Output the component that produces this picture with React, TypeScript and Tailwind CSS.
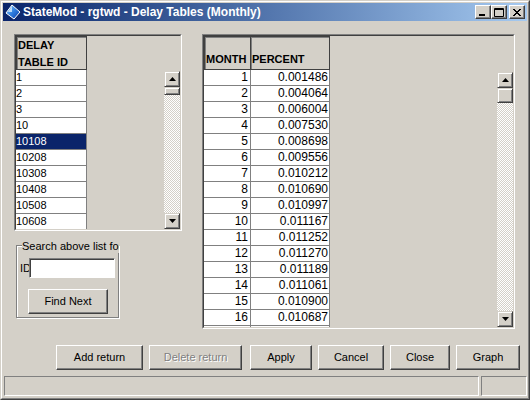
const ids = ["1", "2", "3", "10", "10108", "10208", "10308", "10408", "10508", "10608", "10708"];

const percents = [
  "0.001486", "0.004064", "0.006004", "0.007530", "0.008698", "0.009556",
  "0.010212", "0.010690", "0.010997", "0.011167", "0.011252", "0.011270",
  "0.011189", "0.011061", "0.010900", "0.010687", "0.010443",
];

const raised =
  "border border-t-white border-l-white border-r-[#404040] border-b-[#404040] shadow-[inset_-1px_-1px_0_#808080]";
const sunken =
  "border border-t-[#808080] border-l-[#808080] border-r-white border-b-white";

function Arrow({ up }: { up?: boolean }) {
  return (
    <div className="flex h-4 w-4 shrink-0 items-center justify-center border border-t-[#d4d0c8] border-l-[#d4d0c8] border-r-[#404040] border-b-[#404040] bg-[#d4d0c8] shadow-[inset_1px_1px_0_#fff,inset_-1px_-1px_0_#808080]">
      <svg width="7" height="4" viewBox="0 0 7 4">
        <polygon points={up ? "0,4 7,4 3.5,0" : "0,0 7,0 3.5,4"} fill="#000" />
      </svg>
    </div>
  );
}

function Scrollbar({ thumb }: { thumb: string }) {
  return (
    <div className="flex h-full w-4 flex-col">
      <Arrow up />
      <div
        className={`${thumb} shrink-0 border border-t-[#d4d0c8] border-l-[#d4d0c8] border-r-[#404040] border-b-[#404040] bg-[#d4d0c8] shadow-[inset_1px_1px_0_#fff,inset_-1px_-1px_0_#808080]`}
      />
      <div className="flex-1 bg-[repeating-conic-gradient(#d4d0c8_0_25%,#ffffff_0_50%)] bg-[length:2px_2px]" />
      <Arrow />
    </div>
  );
}

function Button({ label, width, disabled }: { label: string; width: string; disabled?: boolean }) {
  return (
    <button
      type="button"
      className={`${width} flex h-[25px] shrink-0 items-center justify-center bg-[#d4d0c8] text-[11px] ${raised} ${
        disabled ? "text-[#808080] [text-shadow:1px_1px_0_#fff]" : "text-black"
      }`}
    >
      {label}
    </button>
  );
}

function TitleButton({ kind }: { kind: "min" | "max" | "close" }) {
  return (
    <div className="flex h-[14px] w-4 items-center justify-center bg-[#d4d0c8] border border-t-white border-l-white border-r-[#404040] border-b-[#404040] shadow-[inset_-1px_-1px_0_#808080]">
      <svg width="10" height="9" viewBox="0 0 10 9">
        {kind === "min" && <rect x="1" y="6" width="6" height="2" fill="#000" />}
        {kind === "max" && (
          <path d="M0.5 0.5h9v8h-9z M0.5 1.5h9" stroke="#000" fill="none" strokeWidth="1" />
        )}
        {kind === "close" && (
          <path d="M1 1l7 7M2 1l7 7M8 1l-7 7M9 1l-7 7" stroke="#000" strokeWidth="1" />
        )}
      </svg>
    </div>
  );
}

function AppIcon() {
  return (
    <svg width="16" height="16" viewBox="0 0 16 16">
      <defs>
        <linearGradient id="gem" x1="0" y1="0" x2="1" y2="1">
          <stop offset="0" stopColor="#9fd4ff" />
          <stop offset="0.5" stopColor="#2f7fe0" />
          <stop offset="1" stopColor="#0b3ca8" />
        </linearGradient>
      </defs>
      <path d="M7 1 L15 8 L9 15 L1 9 Z" fill="url(#gem)" stroke="#ffffff" strokeWidth="1" />
      <path d="M7 2 L3 8 L7 8 Z" fill="#d8efff" opacity="0.8" />
    </svg>
  );
}

export default function App() {
  return (
    <div className="h-[400px] w-[530px] font-['Liberation_Sans',Arial,sans-serif] text-black">
      <div className="flex h-full flex-col border border-t-[#d4d0c8] border-l-[#d4d0c8] border-r-[#404040] border-b-[#404040] bg-[#d4d0c8]">
        <div className="flex flex-1 flex-col border border-t-white border-l-white border-r-[#808080] border-b-[#808080] p-px">
          {/* title bar */}
          <div className="flex h-[18px] shrink-0 items-center bg-linear-to-r from-[#0a246a] to-[#a6caf0] pl-[2px] pr-[2px]">
            <AppIcon />
            <span className="ml-[2px] text-[12px] font-bold leading-none text-white">
              StateMod - rgtwd - Delay Tables (Monthly)
            </span>
            <div className="ml-auto flex items-center">
              <TitleButton kind="min" />
              <TitleButton kind="max" />
              <div className="w-[2px]" />
              <TitleButton kind="close" />
            </div>
          </div>

          {/* tables */}
          <div className="flex h-[308px] shrink-0 pl-[11px] pt-[13px]">
            <div className="flex w-[168px] flex-col">
              <div className={`h-[197px] w-[168px] ${sunken}`}>
                <div className="flex h-full flex-col border border-t-[#404040] border-l-[#404040] border-r-[#d4d0c8] border-b-[#d4d0c8]">
                  <div className="flex h-[34px] shrink-0">
                    <div className="w-[71px] border border-[#404040] pl-px text-[11px] font-bold leading-[17px] shadow-[inset_1px_1px_0_#808080]">
                      DELAY
                      <br />
                      TABLE ID
                    </div>
                  </div>
                  <div className="flex min-h-0 flex-1 overflow-hidden">
                    <div className="w-[71px]">
                      {ids.map((id) => (
                        <div
                          key={id}
                          className={`h-4 border-b border-r border-[#808080] text-[11px] leading-[15px] ${
                            id === "10108" ? "bg-[#0a246a] text-white" : "bg-white"
                          }`}
                        >
                          {id}
                        </div>
                      ))}
                    </div>
                    <div className="flex-1" />
                    <div className="pt-px">
                      <Scrollbar thumb="h-[8px]" />
                    </div>
                  </div>
                </div>
              </div>

              <div className="ml-[2px] mt-[14px] flex h-[73px] w-[103px] flex-col border border-[#808080] shadow-[inset_1px_1px_0_#fff,1px_1px_0_#fff]">
                <span className="-mt-[6px] ml-[5px] w-[97px] overflow-hidden whitespace-nowrap bg-[#d4d0c8] text-[11px] leading-[13px]">
                  Search above list for
                </span>
                <div className="mt-[5px] flex h-5 items-center pl-[3px]">
                  <span className="w-[9px] text-[11px] leading-none">ID</span>
                  <div className={`h-5 w-[86px] bg-white ${sunken} shadow-[inset_1px_1px_0_#404040]`} />
                </div>
                <div className="mt-[11px] pl-[11px]">
                  <Button label="Find Next" width="w-[80px]" />
                </div>
              </div>
            </div>

            <div className={`ml-[20px] h-[295px] w-[313px] ${sunken}`}>
              <div className="flex h-full flex-col border border-t-[#404040] border-l-[#404040] border-r-[#d4d0c8] border-b-[#d4d0c8]">
                <div className="flex h-[34px] shrink-0 text-[11px] font-bold">
                  <div className="flex w-[47px] items-end border border-[#404040] pb-[2px] pl-px shadow-[inset_1px_1px_0_#808080]">
                    MONTH
                  </div>
                  <div className="flex w-[79px] items-end border border-l-0 border-[#404040] pb-[2px] pl-px shadow-[inset_1px_1px_0_#808080]">
                    PERCENT
                  </div>
                </div>
                <div className="flex min-h-0 flex-1 overflow-hidden">
                  <div className="w-[126px]">
                    {percents.map((p, i) => (
                      <div key={i} className="flex h-4 bg-white text-[12px] leading-[15px]">
                        <div className="w-[47px] border-b border-r border-[#808080] pr-[2px] text-right">{i + 1}</div>
                        <div className="w-[79px] border-b border-r border-[#808080] pr-px text-right">{p}</div>
                      </div>
                    ))}
                  </div>
                  <div className="flex-1" />
                  <div className="pt-[2px]">
                    <Scrollbar thumb="h-[15px]" />
                  </div>
                </div>
              </div>
            </div>
          </div>

          {/* buttons */}
          <div className="mt-[16px] flex h-[25px] shrink-0 gap-[6px] pl-[53px]">
            <Button label="Add return" width="w-[87px]" />
            <Button label="Delete return" width="w-[93px]" disabled />
            <div className="ml-[2px] flex gap-[6px]">
              <Button label="Apply" width="w-[62px]" />
              <Button label="Cancel" width="w-[66px]" />
              <Button label="Close" width="w-[60px]" />
              <Button label="Graph" width="w-[64px]" />
            </div>
          </div>

          {/* status bar */}
          <div className="mt-[6px] flex h-5 shrink-0 gap-[2px] pl-px">
            <div className={`h-5 w-[475px] ${sunken}`} />
            <div className={`h-5 w-[46px] ${sunken}`} />
          </div>
        </div>
      </div>
    </div>
  );
}
